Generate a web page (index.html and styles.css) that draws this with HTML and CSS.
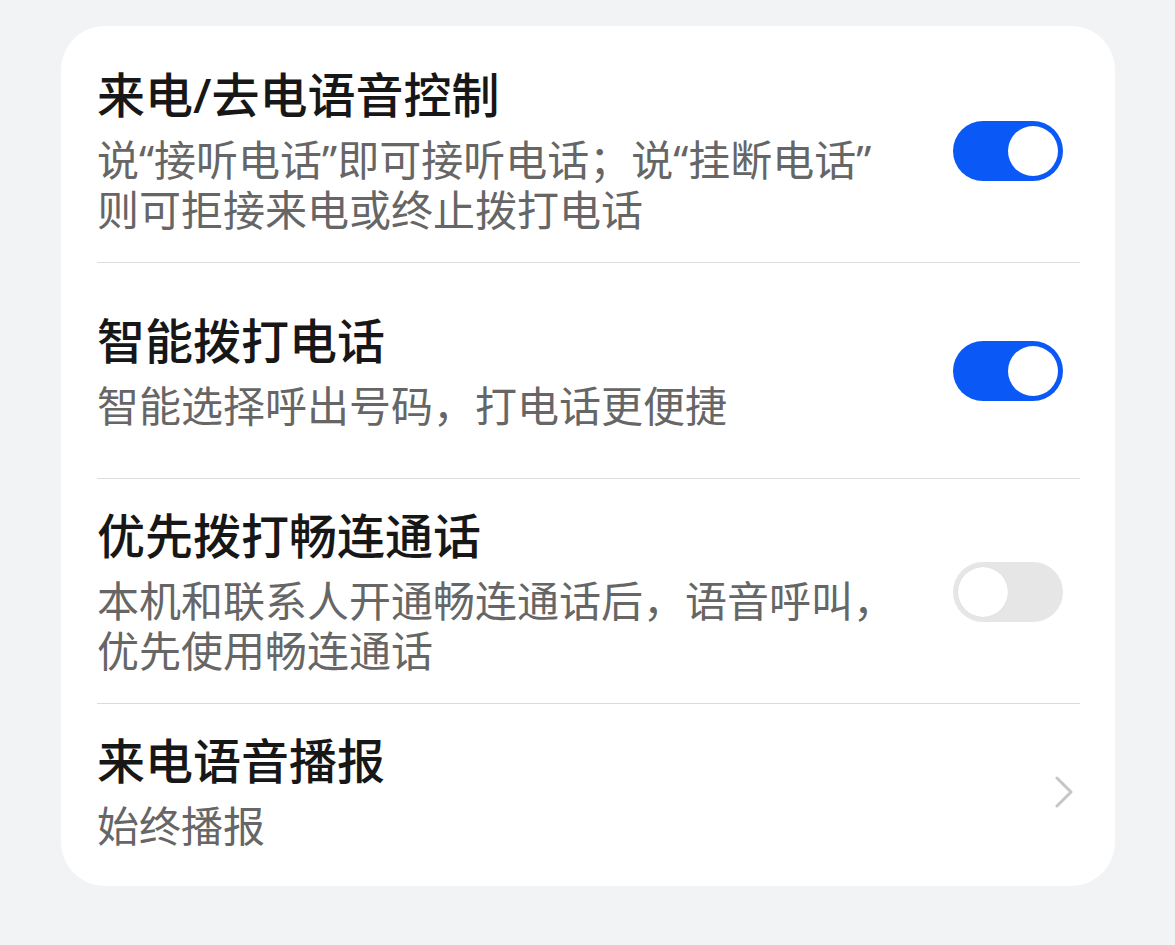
FILE: index.html
```html
<!DOCTYPE html>
<html lang="zh-CN">
    <head>
        <meta charset="utf-8">
        <link rel="stylesheet" href="styles.css">
        <title>通话设置</title>
    </head>

    <body>
        <div class="card">
            <!-- voice control -->
            <div class="row">
                <div class="text">
                    <p class="title">来电/去电语音控制</p>
                    <p class="sub">说“接听电话”即可接听电话；说“挂断电话”<br>则可拒接来电或终止拨打电话</p>
                </div>
                <div class="switch on"><span class="knob"></span></div>
            </div>

            <div class="row tall">
                <div class="text">
                    <p class="title">智能拨打电话</p>
                    <p class="sub">智能选择呼出号码，打电话更便捷</p>
                </div>
                <div class="switch on"><span class="knob"></span></div>
            </div>

            <div class="row">
                <div class="text">
                    <p class="title">优先拨打畅连通话</p>
                    <p class="sub">本机和联系人开通畅连通话后，语音呼叫，<br>优先使用畅连通话</p>
                </div>
                <div class="switch"><span class="knob"></span></div>
            </div>

            <!-- announce -->
            <div class="row last">
                <div class="text">
                    <p class="title">来电语音播报</p>
                    <p class="sub">始终播报</p>
                </div>
                <svg class="chevron" width="20" height="32" viewBox="0 0 20 32">
                    <path d="M3 2 L17 16 L3 30" fill="none" stroke="#c6c6c6" stroke-width="3" stroke-linecap="round" stroke-linejoin="round"/>
                </svg>
            </div>
        </div>
    </body>
</html>
```

FILE: styles.css
```css
* {
    box-sizing: border-box;
    margin: 0;
    padding: 0;
}
html,
body {
    height: 100%;
}
body {
    background: #f1f3f5;
    font-family: 'Noto Sans', 'Noto Sans CJK SC', sans-serif;
    padding: 26px 60px 0 61px;
}
.card {
    width: 1054px;
    background: #fff;
    border-radius: 44px;
    padding: 12px 35px 8px 36px;
}
.row {
    display: flex;
    align-items: center;
    padding: 28px 0 27px;
    border-bottom: 1px solid #dcdcdc;
}
.row.tall {
    min-height: 216px;
}
.row.last {
    border-bottom: 0;
}
.text {
    flex: 1;
    display: flex;
    flex-direction: column;
    gap: 11px;
}
.title {
    font-size: 48px;
    line-height: 58px;
    font-weight: 500;
    color: #171717;
}
.sub {
    font-size: 42px;
    line-height: 50px;
    color: #666;
}
.switch {
    width: 110px;
    height: 60px;
    border-radius: 30px;
    background: #e6e6e6;
    padding: 5px;
    margin-right: 17px;
    display: flex;
}
.switch .knob {
    width: 50px;
    height: 50px;
    border-radius: 50%;
    background: #fff;
    box-shadow: 0 0 1px rgba(0, 0, 0, 0.12);
}
.switch.on {
    background: #0a59f7;
    justify-content: flex-end;
}
.switch.on .knob {
    box-shadow: none;
}
.chevron {
    margin-right: 6px;
}
```
